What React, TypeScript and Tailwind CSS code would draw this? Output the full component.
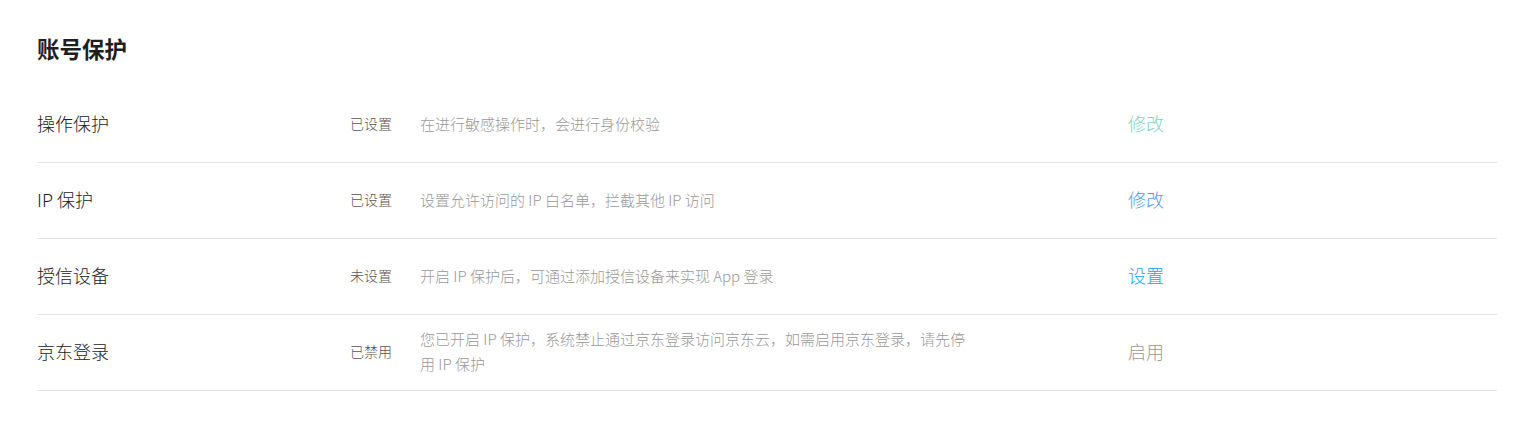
const rows = [
  {
    label: "操作保护",
    status: "已设置",
    desc: "在进行敏感操作时，会进行身份校验",
    action: "修改",
    color: "text-[#7dd6c2]",
  },
  {
    label: "IP 保护",
    status: "已设置",
    desc: "设置允许访问的 IP 白名单，拦截其他 IP 访问",
    action: "修改",
    color: "text-[#4b9ef5]",
  },
  {
    label: "授信设备",
    status: "未设置",
    desc: "开启 IP 保护后，可通过添加授信设备来实现 App 登录",
    action: "设置",
    color: "text-[#23a3f3]",
  },
  {
    label: "京东登录",
    status: "已禁用",
    desc: "您已开启 IP 保护，系统禁止通过京东登录访问京东云，如需启用京东登录，请先停用 IP 保护",
    action: "启用",
    color: "text-[#999999]",
  },
];

// Account protection settings list
export default function App() {
  return (
    <main className="min-h-screen w-full bg-white pl-[37px] pr-[25px] pt-[33px] font-['Noto_Sans_CJK_SC','Noto_Sans',sans-serif]">
      <h2 className="text-[22.5px] font-bold leading-[30px] text-[#1f1f1f]">账号保护</h2>

      <div className="mt-[24px]">
        {rows.map((row) => (
          <div
            key={row.label}
            className="flex h-[76px] items-center border-b border-[#e3e3e3] pb-[3px]"
          >
            <div className="w-[313px] text-[18px] font-light text-[#222222]">{row.label}</div>
            <div className="w-[70px] text-[14px] font-light text-[#555555]">{row.status}</div>
            <div className="w-[708px]">
              <p className="max-w-[552px] text-[15px] font-light leading-[25px] text-[#999999]">
                {row.desc}
              </p>
            </div>
            <button className={`text-[18px] font-light ${row.color}`}>{row.action}</button>
          </div>
        ))}
      </div>
    </main>
  );
}
